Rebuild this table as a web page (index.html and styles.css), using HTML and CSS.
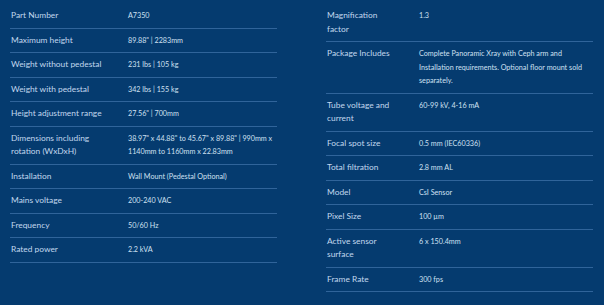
FILE: index.html
```html
<!DOCTYPE html>
<html>
<head>
<meta charset="utf-8">
<link rel="stylesheet" href="styles.css">
</head>
<body>
<div class="specs">
  <div class="col col-left">
    <div class="row"><div class="label">Part Number</div><div class="value">A7350</div></div>
    <div class="row"><div class="label">Maximum height</div><div class="value">89.88" | 2283mm</div></div>
    <div class="row"><div class="label">Weight without pedestal</div><div class="value">231 lbs | 105 kg</div></div>
    <div class="row"><div class="label">Weight with pedestal</div><div class="value">342 lbs | 155 kg</div></div>
    <div class="row"><div class="label">Height adjustment range</div><div class="value">27.56" | 700mm</div></div>
    <div class="row"><div class="label">Dimensions including rotation (WxDxH)</div><div class="value">38.97" x 44.88" to 45.67" x 89.88" | 990mm x 1140mm to 1160mm x 22.83mm</div></div>
    <div class="row"><div class="label">Installation</div><div class="value">Wall Mount (Pedestal Optional)</div></div>
    <div class="row"><div class="label">Mains voltage</div><div class="value">200-240 VAC</div></div>
    <div class="row"><div class="label">Frequency</div><div class="value">50/60 Hz</div></div>
    <div class="row"><div class="label">Rated power</div><div class="value">2.2 kVA</div></div>
  </div>
  <div class="col col-right">
    <div class="row"><div class="label">Magnification factor</div><div class="value">1.3</div></div>
    <div class="row"><div class="label">Package Includes</div><div class="value">Complete Panoramic Xray with Ceph arm and Installation requirements. Optional floor mount sold separately.</div></div>
    <div class="row"><div class="label">Tube voltage and current</div><div class="value">60-99 kV, 4-16 mA</div></div>
    <div class="row"><div class="label">Focal spot size</div><div class="value">0.5 mm (IEC60336)</div></div>
    <div class="row"><div class="label">Total filtration</div><div class="value">2.8 mm AL</div></div>
    <div class="row"><div class="label">Model</div><div class="value">CsI Sensor</div></div>
    <div class="row"><div class="label">Pixel Size</div><div class="value">100 µm</div></div>
    <div class="row"><div class="label">Active sensor surface</div><div class="value">6 x 150.4mm</div></div>
    <div class="row"><div class="label">Frame Rate</div><div class="value">300 fps</div></div>
  </div>
</div>
</body>
</html>
```
FILE: styles.css
```css
html, body {
  margin: 0;
  padding: 0;
  background: #053b6f;
}
body {
  width: 604px;
  height: 305px;
  overflow: hidden;
  font-family: Lato, "Liberation Sans", sans-serif;
  font-size: 8.4px;
  line-height: 13.5px;
  color: #c2d8ee;
}
.specs {
  display: grid;
  grid-template-columns: 267px 267px;
  column-gap: 49px;
  padding: 4px 0 0 10px;
  align-items: start;
}
.row {
  display: grid;
  padding: 5px 0;
  border-bottom: 1px solid #30649a;
}
.col-left .row {
  grid-template-columns: 118px 1fr;
}
.col-right .row {
  grid-template-columns: 93px 1fr;
}
.label {
  padding-left: 1px;
  padding-right: 20px;
}
.value {
  font-size: 7.2px;
  color: #cfe0f2;
}
```
